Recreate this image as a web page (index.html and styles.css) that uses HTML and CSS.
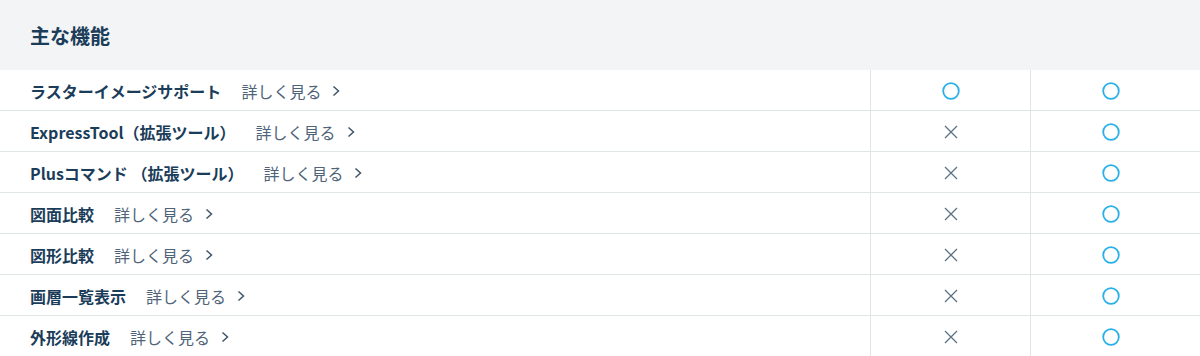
FILE: index.html
```html
<!DOCTYPE html>
<html lang="ja">
<head>
<meta charset="utf-8">
<link rel="stylesheet" href="styles.css">
</head>
<body>
<div class="table">
  <div class="head">主な機能</div>

  <div class="row">
    <div class="name"><span class="label">ラスターイメージサポート</span><a class="more">詳しく見る<svg class="chev" width="8" height="12" viewBox="0 0 8 12"><path d="M1.5 1.5l5 4.5-5 4.5" fill="none" stroke="currentColor" stroke-width="1.5"/></svg></a></div>
    <div class="cell"><svg class="ok" width="18" height="18" viewBox="0 0 18 18"><circle cx="9" cy="9" r="7.8" fill="none" stroke="currentColor" stroke-width="1.8"/></svg></div>
    <div class="cell last"><svg class="ok" width="18" height="18" viewBox="0 0 18 18"><circle cx="9" cy="9" r="7.8" fill="none" stroke="currentColor" stroke-width="1.8"/></svg></div>
  </div>

  <div class="row">
    <div class="name"><span class="label">ExpressTool（拡張ツール）</span><a class="more">詳しく見る<svg class="chev" width="8" height="12" viewBox="0 0 8 12"><path d="M1.5 1.5l5 4.5-5 4.5" fill="none" stroke="currentColor" stroke-width="1.5"/></svg></a></div>
    <div class="cell"><svg class="ng" width="14" height="14" viewBox="0 0 14 14"><path d="M1 1l12 12M13 1L1 13" fill="none" stroke="currentColor" stroke-width="1.3"/></svg></div>
    <div class="cell last"><svg class="ok" width="18" height="18" viewBox="0 0 18 18"><circle cx="9" cy="9" r="7.8" fill="none" stroke="currentColor" stroke-width="1.8"/></svg></div>
  </div>

  <div class="row">
    <div class="name"><span class="label">Plusコマンド （拡張ツール）</span><a class="more">詳しく見る<svg class="chev" width="8" height="12" viewBox="0 0 8 12"><path d="M1.5 1.5l5 4.5-5 4.5" fill="none" stroke="currentColor" stroke-width="1.5"/></svg></a></div>
    <div class="cell"><svg class="ng" width="14" height="14" viewBox="0 0 14 14"><path d="M1 1l12 12M13 1L1 13" fill="none" stroke="currentColor" stroke-width="1.3"/></svg></div>
    <div class="cell last"><svg class="ok" width="18" height="18" viewBox="0 0 18 18"><circle cx="9" cy="9" r="7.8" fill="none" stroke="currentColor" stroke-width="1.8"/></svg></div>
  </div>

  <div class="row">
    <div class="name"><span class="label">図面比較</span><a class="more">詳しく見る<svg class="chev" width="8" height="12" viewBox="0 0 8 12"><path d="M1.5 1.5l5 4.5-5 4.5" fill="none" stroke="currentColor" stroke-width="1.5"/></svg></a></div>
    <div class="cell"><svg class="ng" width="14" height="14" viewBox="0 0 14 14"><path d="M1 1l12 12M13 1L1 13" fill="none" stroke="currentColor" stroke-width="1.3"/></svg></div>
    <div class="cell last"><svg class="ok" width="18" height="18" viewBox="0 0 18 18"><circle cx="9" cy="9" r="7.8" fill="none" stroke="currentColor" stroke-width="1.8"/></svg></div>
  </div>

  <div class="row">
    <div class="name"><span class="label">図形比較</span><a class="more">詳しく見る<svg class="chev" width="8" height="12" viewBox="0 0 8 12"><path d="M1.5 1.5l5 4.5-5 4.5" fill="none" stroke="currentColor" stroke-width="1.5"/></svg></a></div>
    <div class="cell"><svg class="ng" width="14" height="14" viewBox="0 0 14 14"><path d="M1 1l12 12M13 1L1 13" fill="none" stroke="currentColor" stroke-width="1.3"/></svg></div>
    <div class="cell last"><svg class="ok" width="18" height="18" viewBox="0 0 18 18"><circle cx="9" cy="9" r="7.8" fill="none" stroke="currentColor" stroke-width="1.8"/></svg></div>
  </div>

  <div class="row">
    <div class="name"><span class="label">画層一覧表示</span><a class="more">詳しく見る<svg class="chev" width="8" height="12" viewBox="0 0 8 12"><path d="M1.5 1.5l5 4.5-5 4.5" fill="none" stroke="currentColor" stroke-width="1.5"/></svg></a></div>
    <div class="cell"><svg class="ng" width="14" height="14" viewBox="0 0 14 14"><path d="M1 1l12 12M13 1L1 13" fill="none" stroke="currentColor" stroke-width="1.3"/></svg></div>
    <div class="cell last"><svg class="ok" width="18" height="18" viewBox="0 0 18 18"><circle cx="9" cy="9" r="7.8" fill="none" stroke="currentColor" stroke-width="1.8"/></svg></div>
  </div>

  <div class="row">
    <div class="name"><span class="label">外形線作成</span><a class="more">詳しく見る<svg class="chev" width="8" height="12" viewBox="0 0 8 12"><path d="M1.5 1.5l5 4.5-5 4.5" fill="none" stroke="currentColor" stroke-width="1.5"/></svg></a></div>
    <div class="cell"><svg class="ng" width="14" height="14" viewBox="0 0 14 14"><path d="M1 1l12 12M13 1L1 13" fill="none" stroke="currentColor" stroke-width="1.3"/></svg></div>
    <div class="cell last"><svg class="ok" width="18" height="18" viewBox="0 0 18 18"><circle cx="9" cy="9" r="7.8" fill="none" stroke="currentColor" stroke-width="1.8"/></svg></div>
  </div>
</div>
</body>
</html>
```
FILE: styles.css
```css
html, body {
  margin: 0;
  padding: 0;
  background: #ffffff;
}
body {
  font-family: "Noto Sans CJK JP", "Noto Sans", sans-serif;
  color: #1b3d5a;
}
.table {
  width: 1200px;
}
.head {
  height: 70px;
  background: #f3f4f6;
  display: flex;
  align-items: center;
  padding-left: 30px;
  padding-top: 1px;
  font-size: 20px;
  font-weight: 700;
  color: #1b3d5a;
  box-sizing: border-box;
}
.row {
  display: grid;
  grid-template-columns: 870px 160px 170px;
  height: 41px;
  border-bottom: 1px solid #e0e5e8;
  box-sizing: border-box;
}
.name {
  display: flex;
  align-items: center;
  padding-left: 30px;
  padding-top: 1px;
  font-size: 16px;
}
.label {
  font-weight: 700;
  color: #1b3d5a;
}
.more {
  display: flex;
  align-items: center;
  margin-left: 20px;
  color: #4f6479;
  font-weight: 400;
}
.chev {
  margin-left: 11px;
  color: #3f5469;
}
.cell {
  display: flex;
  align-items: center;
  justify-content: center;
  padding-top: 1px;
  border-left: 1px solid #e0e5e8;
}
.cell.last {
  padding-right: 10px;
}
.ok {
  color: #2ab0e8;
}
.ng {
  color: #5b7184;
}
```
